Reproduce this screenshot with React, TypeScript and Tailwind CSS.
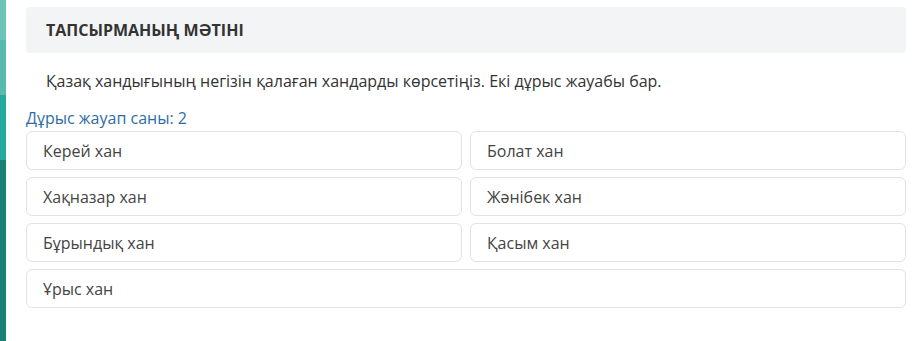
const options = [
  "Керей хан",
  "Болат хан",
  "Хақназар хан",
  "Жәнібек хан",
  "Бұрындық хан",
  "Қасым хан",
  "Ұрыс хан",
];

export default function App() {
  return (
    <div
      className="flex h-[341px] w-[918px] bg-white"
      style={{ fontFamily: '"Open Sans", "Noto Sans", sans-serif' }}
    >
      <div className="flex w-[6px] flex-col">
        <div className="h-[40px] bg-[#6cc4b9]" />
        <div className="h-[55px] bg-[#58b9ad]" />
        <div className="h-[65px] bg-[#25a99c]" />
        <div className="flex-1 bg-[#1a8076]" />
      </div>
      <div className="flex flex-1 flex-col pl-[20px] pr-[12px] pt-[7px]">
        <div className="flex h-[46px] items-center rounded-[4px] bg-[#f3f4f6] px-[20px]">
          <span className="text-[16px] font-bold text-[#333]">ТАПСЫРМАНЫҢ МӘТІНІ</span>
        </div>
        <p className="mt-[17px] px-[20px] text-[16px] leading-[22px] text-[#333]">
          Қазақ хандығының негізін қалаған хандарды көрсетіңіз. Екі дұрыс жауабы бар.
        </p>
        <div className="mt-[16px] text-[16px] leading-[20px] text-[#2e6da4]">
          Дұрыс жауап саны: 2
        </div>
        <div className="mt-[3px] grid grid-cols-2 gap-x-[8px] gap-y-[7px]">
          {options.map((o, i) => (
            <div
              key={o}
              className={`flex h-[39px] items-center rounded-[6px] border border-[#e2e2e2] px-[16px] text-[16px] text-[#444] ${
                i === options.length - 1 ? "col-span-2" : ""
              }`}
            >
              {o}
            </div>
          ))}
        </div>
      </div>
    </div>
  );
}
